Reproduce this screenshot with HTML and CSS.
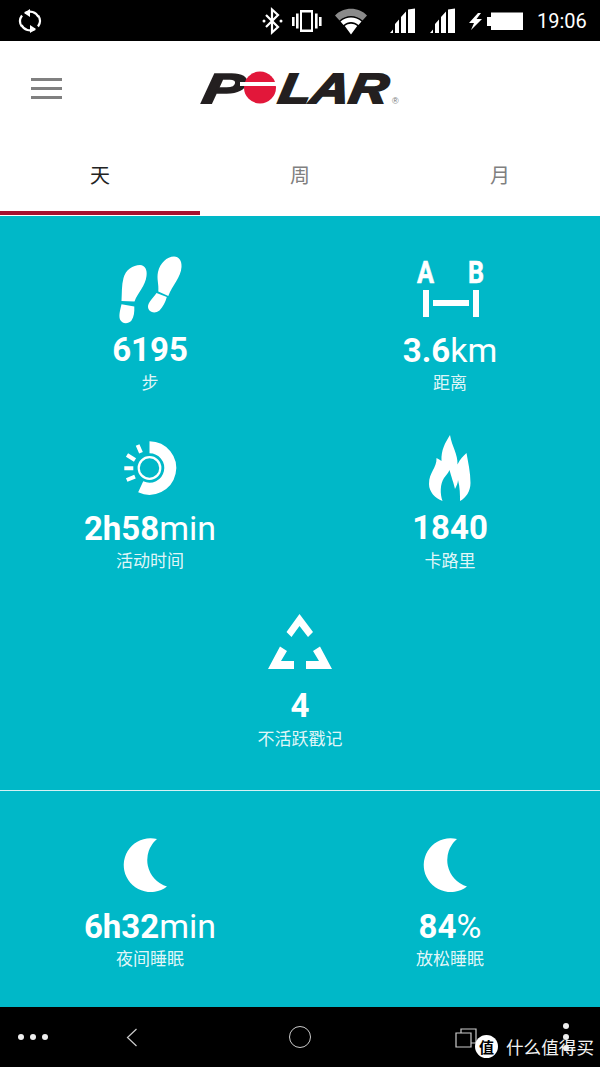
FILE: index.html
```html
<!DOCTYPE html>
<html lang="zh-CN">
<head>
    <meta charset="UTF-8">
    <title>Polar Flow</title>
    <link rel="stylesheet" href="styles.css">
</head>
<body>

<div class="status-bar">
    <svg class="sync" width="30" height="41" viewBox="15 0 30 41" fill="none" stroke="#fff" stroke-width="2.200">
        <path d="M25 13A9.500 9.500 0 0 1 38.500 17"/>
        <path d="M35 29A9.500 9.500 0 0 1 21.500 25"/>
        <path d="M21.800 26.500A9.500 9.500 0 0 1 22 15.500"/>
        <path d="M38.200 15.500A9.500 9.500 0 0 1 38 26.500"/>
        <path d="M30 9l-6 4 6 4z" fill="#fff" stroke="none"/>
        <path d="M30 33l6-4-6-4z" fill="#fff" stroke="none"/>
    </svg>
    <div class="status-icons">
        <svg width="30" height="41" viewBox="258 0 30 41" fill="none" stroke="#fff" stroke-width="2.200">
            <path d="M266 15l12 12-6 5.500V9.500l6 5.500-12 12"/>
            <circle cx="264" cy="21" r="1.500" fill="#fff" stroke="none"/>
            <circle cx="281" cy="21" r="1.500" fill="#fff" stroke="none"/>
        </svg>
        <svg width="40" height="41" viewBox="288 0 40 41" fill="#fff">
            <path d="M300 10h13v22h-13zM302 12.500v17h9v-17z" fill-rule="evenodd"/>
            <path d="M292 17h2.600v9H292zM296 13.500h2.600v15H296zM315 13.500h2.600v15H315zM319 17h2.600v9H319z"/>
        </svg>
        <svg width="56" height="41" viewBox="328 0 56 41">
            <path d="M335 15.500C343 6.500 359 6.500 367 15.500L362.500 20.500C356 14.500 346 14.500 339.500 20.500Z" fill="#8a8a8a"/>
            <path d="M340.500 21.500C346.500 16 355.500 16 361.500 21.500L358.500 25C354 21 348 21 343.500 25ZM344.800 26C348.500 23 353.500 23 357.200 26L351 34.500Z" fill="#fff"/>
        </svg>
        <svg width="40" height="41" viewBox="384 0 40 41" fill="#fff">
            <path d="M390 33l3-3.500V33zM395 33v-9l4-4.500V33zM401 33V17l5-5.500V33zM408 33V9.500l7-1V33z"/>
        </svg>
        <svg width="42" height="41" viewBox="424 0 42 41" fill="#fff">
            <path d="M430 33l3-3.500V33zM435 33v-9l4-4.500V33zM441 33V17l5-5.500V33zM448 33V9.500l7-1V33z"/>
        </svg>
        <svg width="18" height="41" viewBox="466 0 18 41" fill="#fff">
            <path d="M478 13l-9 10h5l-3 7 11-11h-5.500l4.500-6z"/>
        </svg>
        <svg width="42" height="41" viewBox="484 0 42 41" fill="#fff">
            <path d="M491 12.500h32v17.500h-32zM487 17h4v9h-4z"/>
        </svg>
    </div>
    <span class="clock">19:06</span>
</div>

<header class="top-bar">
    <div class="burger"><span></span><span></span><span></span></div>
    <svg class="logo" width="210" height="60" viewBox="195 58 210 60">
        <text class="logo-text" transform="translate(201 102.500) skewX(-10) scale(1.46 1)">P</text>
        <circle cx="260" cy="87.500" r="16" fill="#e2173a"/>
        <rect x="240" y="82" width="40" height="4" fill="#fff"/>
        <text class="logo-text" transform="translate(277 102.500) skewX(-10) scale(1.26 1)">LAR</text>
        <text x="392" y="104" class="logo-reg">®</text>
    </svg>
</header>

<nav class="tabs">
    <div class="tab active">天</div>
    <div class="tab">周</div>
    <div class="tab">月</div>
</nav>

<main class="content">
    <section class="stats activity">
        <div class="stat">
            <svg width="80" height="80" viewBox="110 250 80 80" fill="#fff">
                <path d="M140 265C145 265 147.500 270 146.500 276C145.500 286 138 292 134.500 301.500L121.500 301C122 293 121.500 285 123.500 278C125.500 270 133 265 140 265Z"/>
                <path d="M121.500 304.300L134.300 306.500C134.500 312 134 317 131.500 320.500C128 324.500 122 324 120 319.500C118.500 315 120.500 309 121.500 304.300Z"/>
                <path d="M174 256.500C179 256.500 182 261 181.500 267C181 277 172.500 285 168.300 296L158.300 291.500C159 284 156.500 279 158 272C160 263 167 256.500 174 256.500Z"/>
                <path d="M156.500 293L166.800 297C165.500 302 163 307 159.500 310.500C155 314 148.500 312.500 148 307C147.800 302 153.500 298 156.500 293Z"/>
            </svg>
            <div class="value">6195</div>
            <div class="label">步</div>
        </div>
        <div class="stat">
            <svg width="80" height="80" viewBox="410 250 80 80" fill="#fff">
                <text x="417" y="283" class="ab-text" textLength="17" lengthAdjust="spacingAndGlyphs">A</text>
                <text x="468" y="283" class="ab-text" textLength="16" lengthAdjust="spacingAndGlyphs">B</text>
                <path d="M423 290h6v27h-6zM473 290h6v27h-6zM433 300h36v6h-36z"/>
            </svg>
            <div class="value">3.6<span class="unit">km</span></div>
            <div class="label">距离</div>
        </div>
        <div class="stat">
            <svg width="80" height="80" viewBox="110 428 80 80" fill="none" stroke="#fff">
                <path d="M149.500 447.250A20.750 20.750 0 1 1 140.700 486.800" stroke-width="12"/>
                <circle cx="149.500" cy="468" r="10.800" stroke-width="2.200"/>
                <path d="M137.600 445L141 452.700M127 455L135 460M124.300 468.300H133.300M126.700 480L135 476.700" stroke-width="4"/>
            </svg>
            <div class="value">2h58<span class="unit">min</span></div>
            <div class="label">活动时间</div>
        </div>
        <div class="stat">
            <svg width="80" height="80" viewBox="410 428 80 80" fill="#fff">
                <path d="M450 435C445 443 441 450 441.500 461C440 460 438.500 459 436.500 458C437 468 429 472 429 484C429 492 435 498 442.500 501C440 494 440 484 444 478C446 475 448.500 473 449.500 470C451 476 454 484 455 489C456.500 486 458 483 458 480C460 487 460 495 460 501C466 498 470.500 491 470.500 483C470.500 472 468 462 466.500 453C463.500 456 460 459 457.500 464.500C458 454 452 447 450 435Z"/>
            </svg>
            <div class="value">1840</div>
            <div class="label">卡路里</div>
        </div>
        <div class="stat wide">
            <svg width="80" height="80" viewBox="260 606 80 80" fill="#fff">
                <path d="M299.500 614L313 632L308 637L299.500 626L291.500 637L286.500 632Z"/>
                <path d="M268 669L280 646.500L287 651L281 661H294V669Z"/>
                <path d="M332 669L320 646.500L313 651L319 661H306V669Z"/>
            </svg>
            <div class="value">4</div>
            <div class="label">不活跃戳记</div>
        </div>
    </section>

    <section class="stats sleep">
        <div class="stat">
            <svg width="80" height="80" viewBox="110 826 80 80" fill="#fff">
                <path d="M157 839A26.900 26.900 0 1 0 167 886.500A27.600 27.600 0 0 1 157 839Z"/>
            </svg>
            <div class="value">6h32<span class="unit">min</span></div>
            <div class="label">夜间睡眠</div>
        </div>
        <div class="stat">
            <svg width="80" height="80" viewBox="110 826 80 80" fill="#fff">
                <path d="M157 839A26.900 26.900 0 1 0 167 886.500A27.600 27.600 0 0 1 157 839Z"/>
            </svg>
            <div class="value">84<span class="unit">%</span></div>
            <div class="label">放松睡眠</div>
        </div>
    </section>
</main>

<footer class="nav-bar">
    <div class="dots-h"><span></span><span></span><span></span></div>
    <svg width="20" height="24" viewBox="0 0 20 24" fill="none" stroke="#ccc" stroke-width="1.200"><path d="M14.500 4L5.500 12.500L14.500 21"/></svg>
    <div class="home"></div>
    <svg width="24" height="24" viewBox="0 0 24 24" fill="none" stroke="#ccc" stroke-width="1.200"><path d="M6 8V4H21V18H16"/><path d="M1 8H16V22H1Z"/></svg>
    <div class="dots-v"><span></span><span></span><span></span></div>
    <div class="watermark">
        <span class="watermark-badge">值</span>
        <span>什么值得买</span>
    </div>
</footer>

</body>
</html>
```

FILE: styles.css
```css
body {
    margin: 0;
    width: 600px;
    height: 1067px;
    display: flex;
    flex-direction: column;
    overflow: hidden;
    background: #fff;
    font-family: Roboto, "Noto Sans CJK SC", sans-serif;
}

/* status bar */
.status-bar {
    height: 41px;
    flex: none;
    display: flex;
    align-items: center;
    background: #000;
    padding-left: 15px;
}
.status-icons {
    display: flex;
    margin-left: 213px;
}
.clock {
    margin-left: 11px;
    color: #fff;
    font-size: 20px;
}

/* header */
.top-bar {
    box-sizing: border-box;
    height: 96px;
    flex: none;
    display: flex;
    align-items: center;
    padding: 0 0 2px 31px;
}
.burger {
    width: 31px;
    display: flex;
    flex-direction: column;
    gap: 6px;
}
.burger span {
    height: 3px;
    background: #808080;
}
.logo {
    margin-left: 133px;
}
.logo-text {
    font-family: "Liberation Sans", sans-serif;
    font-weight: bold;
    font-style: italic;
    font-size: 42px;
    fill: #231f20;
    stroke: #231f20;
    stroke-width: 2;
}
.logo-reg {
    font-family: "Liberation Sans", sans-serif;
    font-size: 9px;
    fill: #777;
}

/* tabs */
.tabs {
    height: 79px;
    flex: none;
    display: flex;
}
.tab {
    flex: 1;
    box-sizing: border-box;
    display: flex;
    align-items: center;
    justify-content: center;
    padding-top: 1px;
    margin-bottom: 1px;
    border-bottom: 4px solid transparent;
    font-family: "Noto Sans CJK SC", sans-serif;
    font-size: 20px;
    color: #808080;
}
.tab.active {
    color: #222;
    border-bottom-color: #a5112f;
}

/* stats */
.content {
    flex: 1;
    background: #00b8c8;
}
.stats {
    display: grid;
    grid-template-columns: 1fr 1fr;
}
.activity {
    height: 540px;
    padding-top: 34px;
    border-bottom: 1px solid #d4f2f5;
    grid-auto-rows: 178px;
}
.sleep {
    padding-top: 35px;
}
.stat {
    display: flex;
    flex-direction: column;
    align-items: center;
    color: #fff;
}
.stat.wide {
    grid-column: 1 / 3;
}
.value {
    margin-top: 2px;
    height: 36px;
    line-height: 36px;
    font-size: 33px;
    font-weight: 700;
}
.unit {
    font-size: 34px;
    font-weight: 400;
}
.label {
    margin-top: 2px;
    height: 24px;
    line-height: 24px;
    font-family: "Noto Sans CJK SC", sans-serif;
    font-size: 17px;
    color: rgba(255, 255, 255, 0.9);
}
.ab-text {
    font-family: Roboto, sans-serif;
    font-weight: 700;
    font-size: 31px;
    stroke: #fff;
    stroke-width: 0.6;
}

/* bottom nav */
.nav-bar {
    position: relative;
    height: 60px;
    flex: none;
    display: grid;
    grid-template-columns: 66px 132px 204px 130px 68px;
    justify-items: center;
    align-items: center;
    background: #000;
}
.dots-h {
    display: flex;
    gap: 6px;
}
.dots-h span, .dots-v span {
    width: 6px;
    height: 6px;
    border-radius: 50%;
    background: #eee;
}
.dots-v {
    display: flex;
    flex-direction: column;
    gap: 5px;
}
.home {
    width: 20px;
    height: 20px;
    border: 1.2px solid #ccc;
    border-radius: 50%;
}
.watermark {
    position: absolute;
    left: 475px;
    top: 28px;
    display: flex;
    align-items: center;
    gap: 8px;
    font-family: "Noto Sans CJK SC", sans-serif;
    font-size: 17.600px;
    line-height: 22px;
    color: #f2f2f2;
}
.watermark-badge {
    width: 23px;
    height: 23px;
    border-radius: 50%;
    background: #fff;
    color: #000;
    font-size: 15px;
    line-height: 23px;
    font-weight: bold;
    text-align: center;
}
```
